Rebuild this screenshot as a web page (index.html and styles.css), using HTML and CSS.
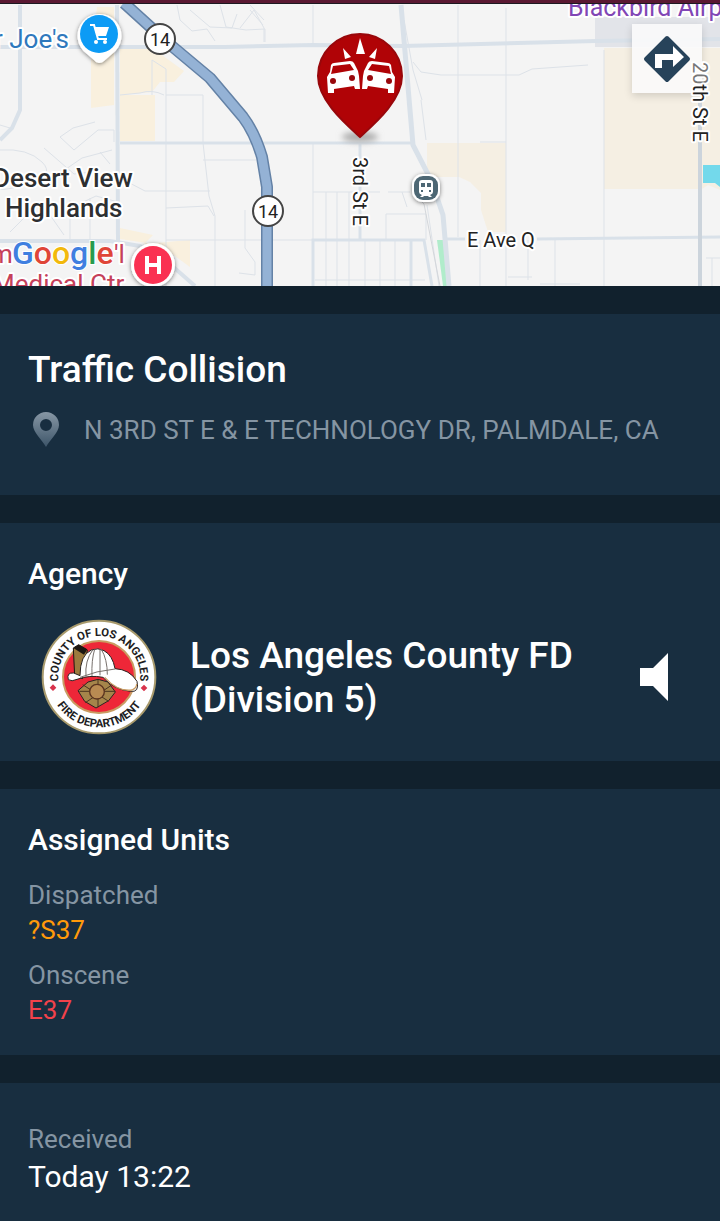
FILE: index.html
```html
<!DOCTYPE html>
<html lang="en">

<head>
    <meta charset="UTF-8">
    <meta name="viewport" content="width=device-width, initial-scale=1.0">
    <title>Traffic Collision</title>
    <link rel="stylesheet" href="styles.css">
</head>

<body>
    <div class="status-strip"></div>

    <div class="map">
        <svg class="map-canvas" viewBox="0 4 720 282" role="img" aria-label="Map of Palmdale">
            <defs>
                <filter id="shadow" x="-30%" y="-30%" width="160%" height="160%">
                    <feDropShadow dx="0" dy="1" stdDeviation="2" flood-color="#000" flood-opacity="0.5" />
                </filter>
                <filter id="soft" x="-50%" y="-100%" width="200%" height="300%">
                    <feGaussianBlur stdDeviation="3" />
                </filter>
            </defs>
            <rect y="4" width="720" height="282" fill="#f4f4f4" />

            <!-- areas -->
            <g fill="#f9f0de">
                <path d="M97 7h17v98l-23 3V57zM120 45h28l36 26-10 11h-14l-8 10-32 3zM120 95h35v46h-35zM120 228l33 7-9 9 46-4v27l-30-22-40-6z" />
            </g>
            <g fill="#f5efe3">
                <path d="M427 143h79v89h-18l-7-22v-17l-11-11-11-5h-24l-8-7zM604 48h116v142l-12-5-6 4H604z" />
            </g>
            <path d="M595 17h125v30H595z" fill="#e2e4e9" />
            <path d="M703 165h17v22l-5-4h-12z" fill="#73d9eb" />
            <path d="M437 240h6l7 46h-7z" fill="#b0eccb" />

            <!-- small streets -->
            <g fill="none" stroke="#dde2e8" stroke-width="1">
                <path d="M177 5l3 15 12 11 15-2 8 12M190 10l20 17 22 1 5-14M220 5l6 22 20 3 19-1v13M250 10l13 15M152 95V60l14 9v26h37v48M120 95l20-2q12-4 24 2M166 95v191" />
                <path d="M60 137l13-9 22-6M60 137l14 13 24-20 16 0v12M50 180l32-22 30-8M0 150q28-2 42 12t-14 22-28 4M44 148l30 26 18-2M10 232l30-30 26 8 30-14 22 6M50 215l14 20M70 200v40M90 198v42M100 152l10 12M0 125l10 3" />
                <path d="M120 178l25 13h65M203 143l6 53 6 20v70M166 208l42-2 6 10M203 160h53M215 240h97M166 240h49M245 210v38l10 14v13l-16-2M313 5v41M313 143v97M313 192h67M388 192h22M402 192l5 15M326 192v48M337 192v48M349 192v48M386 240v-26h40v26" />
                <path d="M326 240v46M337 240v46M349 240v46M365 240v46M380 240v46M395 240v46M315 280h110M458 5v232M404 20l9 50 9 30M413 62l8 10 20 3h78l13-6 56-4M506 8v278M604 50v236M528 240v40M555 240v46M508 277h24M540 284h40M706 258h14M712 258v28M480 240v46" />
                <path d="M427 205l12 81M421 100l5 40M480 142h26" />
                <path d="M240 28l14-18 10 18v14M250 5l14 15" />
            </g>
            <path d="M412 192l12 12 16 82" fill="none" stroke="#d3d6da" />

            <!-- main streets -->
            <g fill="none" stroke="#d9e1e9" stroke-width="3">
                <path d="M20 5v105l-8 18-12 12" stroke-width="4" />
                <path d="M0 47h225l88-2 90 1 193-5 124-2" stroke-width="4" />
                <path d="M117 5l1 236" stroke-width="4" />
                <path d="M120 143h292" />
                <path d="M0 241h110l30 5 30 18 25 22" stroke-width="4" />
                <path d="M401 5l12 140 18 35 12 35 6 71" stroke-width="5" />
                <path d="M360 143v97M313 286v-46h111l8 46M411 240v46M443 239h22M537 239l183-2" />
                <path d="M700 100v186" stroke="#ccd4dc" stroke-width="4" />
            </g>

            <!-- highway 14 -->
            <g fill="none" stroke-linejoin="round">
                <path d="M124 3l43 39 43 36 33 39q12 16 19 40l5 30v100" stroke="#6482a6" stroke-width="12" />
                <path d="M124 3l43 39 43 36 33 39q12 16 19 40l5 30v100" stroke="#94b2d5" stroke-width="9" />
            </g>
            <g class="shield">
                <circle cx="160" cy="39" r="15" />
                <text x="160" y="46">14</text>
                <circle cx="268" cy="211" r="15" />
                <text x="268" y="218">14</text>
            </g>

            <g class="map-label">
                <text class="store" x="-6" y="48">r Joe's</text>
                <text class="town" x="-7" y="187">Desert View</text>
                <text class="town" x="5" y="217">Highlands</text>
                <text class="hospital" x="-10" y="263">m</text>
                <text class="hospital" x="114" y="263">'l</text>
                <text class="hospital" x="-8" y="293">Medical Ctr</text>
                <text class="airport" x="568" y="16">Blackbird Airpark</text>
                <text class="street" x="467" y="247">E Ave Q</text>
                <text class="street" transform="translate(353 157) rotate(90)">3rd St E</text>
            </g>
            <text class="google" x="12" y="264"><tspan fill="#3f7fe0">G</tspan><tspan fill="#df4538">o</tspan><tspan fill="#f2b90c">o</tspan><tspan fill="#3f7fe0">g</tspan><tspan fill="#279b4b">l</tspan><tspan fill="#df4538">e</tspan></text>

            <!-- store pin -->
            <path d="M99 63q-3 0-5-3l-7-6a22 22 0 1 1 25 0l-8 7q-2 2-5 2z" fill="#fff" filter="url(#shadow)" />
            <circle cx="99" cy="34" r="19" fill="#0c9bf5" />
            <path d="M90 25h4l4 14h9" fill="none" stroke="#fff" stroke-width="2" />
            <path d="M94 27h15l-3 9H97z" fill="#fff" />
            <circle cx="96" cy="42" r="2" fill="#fff" />
            <circle cx="105" cy="42" r="2" fill="#fff" />

            <!-- hospital pin -->
            <circle cx="153" cy="265" r="22" fill="#fff" filter="url(#shadow)" />
            <circle cx="153" cy="265" r="19" fill="#fa3152" />
            <path d="M147 256v18M159 256v18M147 265h12" stroke="#fff" stroke-width="4" />

            <!-- train station -->
            <rect x="412" y="174" width="28" height="28" rx="11" fill="#fff" filter="url(#shadow)" />
            <rect x="414" y="176" width="24" height="24" rx="9" fill="#4d6774" />
            <path d="M422 180h8q3 0 3 3v9q0 2-3 3l2 2h-3l-1-1h-4l-1 1h-3l2-2q-3-1-3-3v-9q0-3 3-3z" fill="#fff" />
            <path d="M421 183h4v4h-4zM427 183h4v4h-4zM421 190h2v2h-2zM429 190h2v2h-2z" fill="#4d6774" />

            <!-- incident pin -->
            <ellipse cx="360" cy="137" rx="18" ry="5" fill="#aaa" filter="url(#soft)" />
            <path d="M360 137C347 125 318 101 318 76a42 42 0 0 1 84 0c0 25-29 49-42 61z" fill="#b00306" stroke="#98070b" stroke-width="2" />
            <path d="M360 38l5 16h-9zM343 48l8 9-6 2zM377 48l-8 9 6 2z" fill="#fff" />
            <g id="car">
                <path d="M328 93l-1-16 3-5 1-7q1-2 3-2l16-2q3 0 4 2l4 8 1 5 1 13h-5l-1-3-20 3v4h-5z" fill="#fff" />
                <path d="M333 66l17-2 4 6-23 4z" fill="#b00306" />
                <circle cx="333" cy="81" r="3" fill="#98070b" />
                <circle cx="352" cy="78" r="3" fill="#98070b" />
            </g>
            <use href="#car" transform="matrix(-1 0 0 1 722 0)" />
        </svg>
        <button class="directions" type="button" aria-label="Directions">
            <svg viewBox="0 0 48 48" width="48" height="48">
                <path d="M24 3l21 21-21 21L3 24z" fill="#27435a" stroke="#27435a" stroke-width="4" stroke-linejoin="round" />
                <path d="M12 33V19h18v-8l11 11-11 10v-7H19v8z" fill="#fff" />
            </svg>
        </button>
        <svg class="side-street" viewBox="0 0 24 88" width="24" height="88">
            <text class="street" transform="translate(5 4) rotate(90)"><tspan class="faded">20</tspan>th St E</text>
        </svg>
    </div>

    <main>
        <section class="card incident">
            <h1>Traffic Collision</h1>
            <p class="address">
                <svg viewBox="0 0 28 38" width="28" height="38" aria-hidden="true">
                    <defs>
                        <linearGradient id="pin" x1="0" y1="0" x2="0" y2="1">
                            <stop offset="0" stop-color="#8797a5" />
                            <stop offset="1" stop-color="#3d5569" />
                        </linearGradient>
                    </defs>
                    <path fill-rule="evenodd" d="M14 36C10 29 1 21 1 14a13 13 0 0 1 26 0c0 7-9 15-13 22zM14 8a6 6 0 1 0 0 12 6 6 0 0 0 0-12z" fill="url(#pin)" />
                </svg>
                <span>N 3RD ST E &amp; E TECHNOLOGY DR, PALMDALE, CA</span>
            </p>
        </section>

        <section class="card agency">
            <h2>Agency</h2>
            <div class="agency-row">
                <svg class="seal" viewBox="35 25 348 348" role="img" aria-label="County of Los Angeles Fire Department">
                    <defs>
                        <path id="arc-top" d="M209 322a123 123 0 1 1 1 0" />
                        <path id="arc-bottom" d="M58 199a151 151 0 0 0 302 0" />
                    </defs>
                    <circle cx="209" cy="199" r="169" fill="#fff" stroke="#a89a6c" stroke-width="6" />
                    <circle cx="209" cy="199" r="108" fill="#ee2738" stroke="#c99b62" stroke-width="6" />
                    <text class="seal-text"><textPath href="#arc-top" startOffset="50%" text-anchor="middle">COUNTY OF LOS ANGELES</textPath></text>
                    <text class="seal-text"><textPath href="#arc-bottom" startOffset="50%" text-anchor="middle">FIRE DEPARTMENT</textPath></text>
                    <path d="M71 221l10 10-10 10-10-10zM344 222l10 10-10 10-10-10z" fill="#d8324b" />
                    <!-- helmet -->
                    <path d="M132 112l16-10 26 16-14 86-24-8z" fill="#9c7b3e" stroke="#1c1712" stroke-width="3" />
                    <path d="M132 112l16-10 26 14-10 16z" fill="#1c1712" />
                    <path d="M117 207q-6-22 16-20l19 8q0-62 34-77 20-8 38 2 26 14 33 54 44 2 66 38 8 34-20 30-52-6-82-42-40-8-78 6-16 8-26 1z" fill="#fff" stroke="#2c2422" stroke-width="3" />
                    <path d="M170 198q-4-48 20-80M188 196q-2-48 8-80M212 194v-80M234 192q0-46-18-76M152 200q50-20 105-25" fill="none" stroke="#77706c" stroke-width="3" />
                    <path d="M226 200q40 44 82 38 14-6 14-18" fill="none" stroke="#c99b62" stroke-width="4" />
                    <!-- cross -->
                    <path d="M146 240l30-26 30-8 30 8 22 30-20 26-38 22-34-20z" fill="#a5854a" stroke="#2c2422" stroke-width="3" />
                    <path d="M160 222l78 50M246 224l-78 52M206 206v84M150 242h108" stroke="#4a3520" stroke-width="3" />
                    <circle cx="203" cy="243" r="22" fill="#b98b52" stroke="#5b3420" stroke-width="4" />
                </svg>
                <div class="agency-name">Los Angeles County FD (Division 5)</div>
                <button class="speaker" type="button" aria-label="Listen">
                    <svg viewBox="0 0 28 48" width="28" height="48">
                        <path d="M0 15h13L28 0v48L13 33H0z" fill="#fff" />
                    </svg>
                </button>
            </div>
        </section>

        <section class="card units">
            <h2>Assigned Units</h2>
            <dl>
                <dt>Dispatched</dt>
                <dd class="dispatched">?S37</dd>
                <dt>Onscene</dt>
                <dd class="onscene">E37</dd>
            </dl>
        </section>

        <section class="card received">
            <dl>
                <dt>Received</dt>
                <dd>Today 13:22</dd>
            </dl>
        </section>
    </main>
</body>

</html>
```
FILE: styles.css
```css
body {
    font-family: Roboto, "Liberation Sans", sans-serif;
    display: flex;
    flex-direction: column;
    min-height: 100vh;
    margin: 0;
    background-color: #11212d;
    color: #fff;
}

h1,
h2,
p,
dl,
dd {
    margin: 0;
    font-weight: 500;
}

button {
    display: flex;
    align-items: center;
    justify-content: center;
    padding: 0;
    border: none;
    cursor: pointer;
}

.status-strip {
    height: 3px;
    background-color: #5a1832;
    border-bottom: 1px solid #1c1820;
}

/* map */
.map {
    position: relative;
    overflow: hidden;
}

.map-canvas {
    display: block;
    width: 100%;
}

.map text {
    font-family: Roboto, sans-serif;
}

.map-label text,
.side-street text {
    paint-order: stroke;
    stroke: #fff;
    stroke-width: 4px;
    stroke-linejoin: round;
}

.store {
    font-size: 26px;
    fill: #2f79bd;
}

.town {
    font-size: 26px;
    font-weight: 500;
    fill: #2d2f31;
}

.hospital {
    font-size: 26px;
    fill: #c5405a;
}

.airport {
    font-size: 25px;
    fill: #8146b5;
}

.street {
    font-size: 20px;
    fill: #222;
}

.google {
    font-size: 32px;
    font-weight: 500;
    paint-order: stroke;
    stroke: #fff;
    stroke-width: 2px;
}

.shield circle {
    fill: #fff;
    stroke: #444;
    stroke-width: 2px;
}

.shield text {
    font-size: 18px;
    text-anchor: middle;
    fill: #222;
}

.directions {
    position: absolute;
    top: 20px;
    right: 18px;
    width: 70px;
    height: 69px;
    background-color: rgba(250, 250, 250, 0.92);
    box-shadow: 0 3px 8px rgba(0, 0, 0, 0.15);
}

.side-street {
    position: absolute;
    top: 54px;
    right: 8px;
    pointer-events: none;
}

.faded {
    fill: #777;
}

/* cards */
main {
    display: flex;
    flex-direction: column;
    flex: 1;
    gap: 28px;
    padding-top: 28px;
}

.card {
    padding: 32px 28px;
    background-color: #182e40;
}

h1 {
    font-size: 37px;
    line-height: 48px;
}

h2 {
    font-size: 30px;
    line-height: 38px;
}

.address {
    display: flex;
    align-items: center;
    gap: 24px;
    margin-top: 17px;
    padding: 0 0 14px 4px;
    font-size: 26px;
    font-weight: 400;
    line-height: 38px;
    color: #8595a3;
}

.agency {
    padding-bottom: 26px;
}

.agency-row {
    display: flex;
    align-items: center;
    margin-top: 26px;
    padding: 0 24px 0 13px;
}

.seal {
    flex: none;
    width: 116px;
    height: 116px;
}

.seal-text {
    font-size: 34px;
    font-weight: bold;
    fill: #1d1d22;
}

.agency-name {
    flex: 1;
    margin: 2px 56px 0 33px;
    font-size: 37px;
    font-weight: 500;
    line-height: 44px;
}

.speaker {
    background: none;
}

dt {
    font-size: 26px;
    line-height: 35px;
    color: #8595a3;
}

dd {
    font-size: 26px;
    font-weight: 400;
    line-height: 35px;
}

dl {
    font-weight: 400;
}

.units dl {
    margin-top: 19px;
}

.units dd {
    margin-bottom: 10px;
}

.units {
    padding-bottom: 17px;
}

.units .dispatched {
    color: #ff9a0a;
}

.units .onscene {
    color: #f2424b;
}

.received {
    flex: 1;
    padding-top: 39px;
    padding-bottom: 24px;
}

.received dd {
    font-size: 30px;
    line-height: 40px;
}
```
